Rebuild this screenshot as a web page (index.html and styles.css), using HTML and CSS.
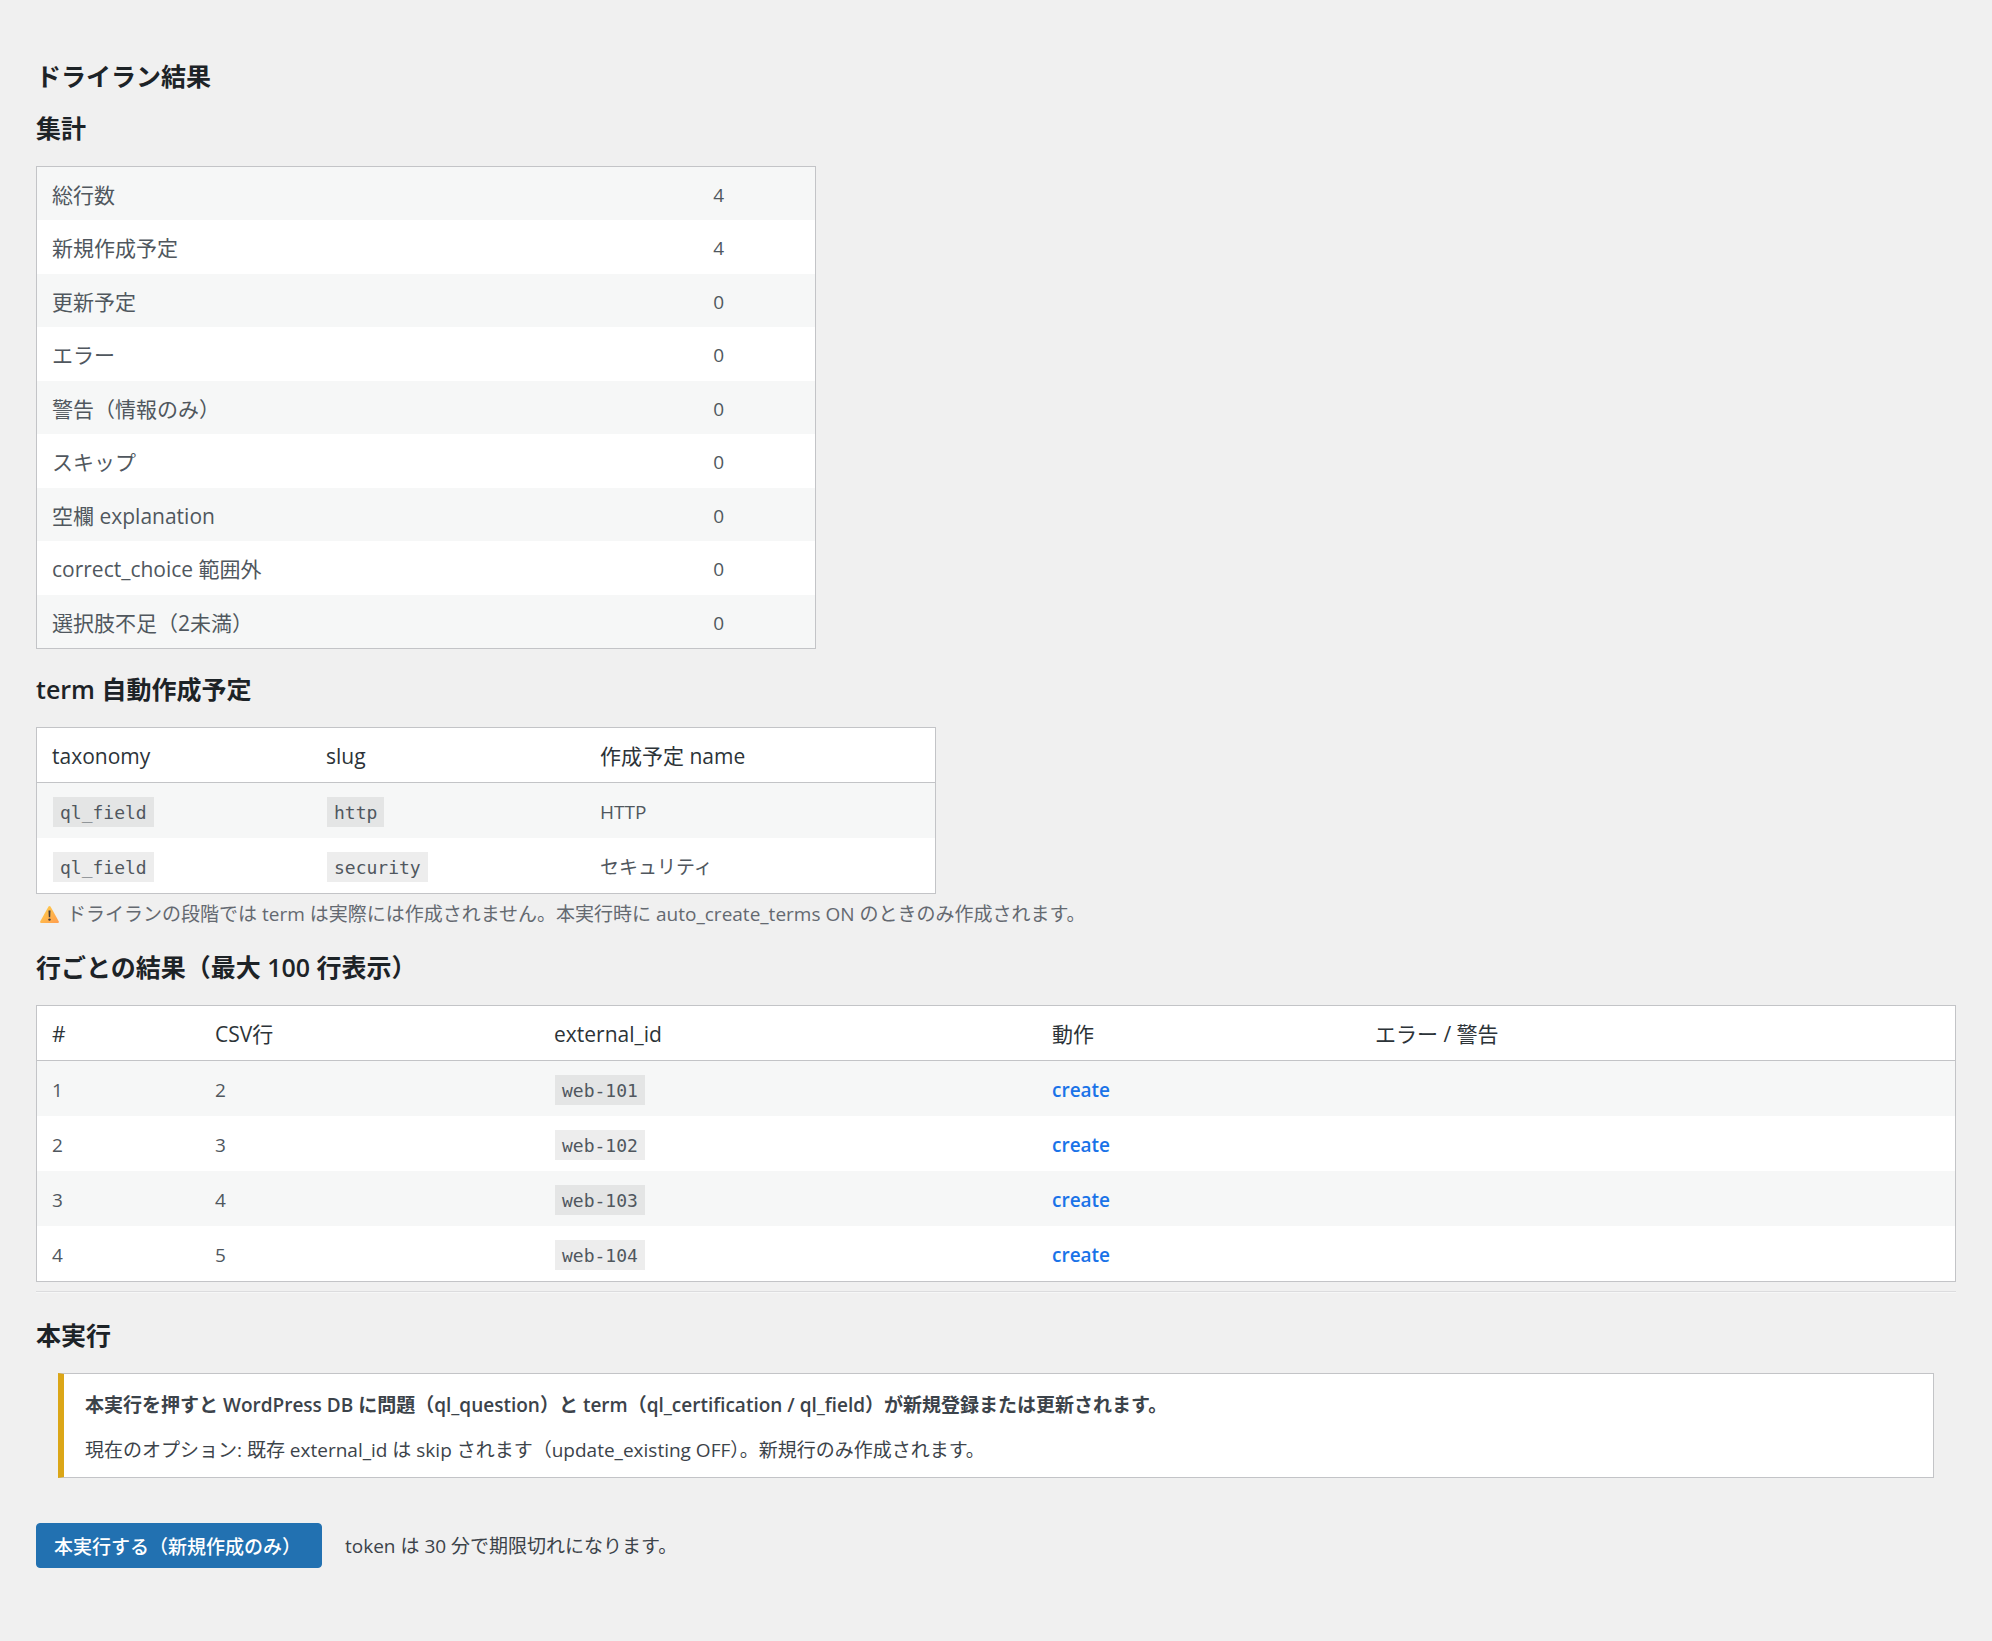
FILE: index.html
```
<!DOCTYPE html>
<html lang="ja">
<head>
    <meta charset="UTF-8">
    <meta name="viewport" content="width=device-width, initial-scale=1.0">
    <title>ドライラン結果</title>
    <link rel="stylesheet" href="styles.css">
</head>
<body>
    <main class="wrap">
        <h2>ドライラン結果</h2>

        <h3>集計</h3>
        <table class="list-table striped summary-table">
            <tbody>
                <tr><th scope="row">総行数</th><td>4</td></tr>
                <tr><th scope="row">新規作成予定</th><td>4</td></tr>
                <tr><th scope="row">更新予定</th><td>0</td></tr>
                <tr><th scope="row">エラー</th><td>0</td></tr>
                <tr><th scope="row">警告（情報のみ）</th><td>0</td></tr>
                <tr><th scope="row">スキップ</th><td>0</td></tr>
                <tr><th scope="row">空欄 explanation</th><td>0</td></tr>
                <tr><th scope="row">correct_choice 範囲外</th><td>0</td></tr>
                <tr><th scope="row">選択肢不足（2未満）</th><td>0</td></tr>
            </tbody>
        </table>

        <h3>term 自動作成予定</h3>
        <table class="list-table striped term-table">
            <thead>
                <tr>
                    <th scope="col" class="col-taxonomy">taxonomy</th>
                    <th scope="col" class="col-slug">slug</th>
                    <th scope="col">作成予定 name</th>
                </tr>
            </thead>
            <tbody>
                <tr>
                    <td><code>ql_field</code></td>
                    <td><code>http</code></td>
                    <td>HTTP</td>
                </tr>
                <tr>
                    <td><code>ql_field</code></td>
                    <td><code>security</code></td>
                    <td>セキュリティ</td>
                </tr>
            </tbody>
        </table>
        <p class="description">
            <svg class="warning-icon" viewBox="0 0 19 17" aria-hidden="true">
                <defs>
                    <linearGradient id="warning-fill" x1="0" y1="0" x2="1" y2="1">
                        <stop offset="0" stop-color="#ffd04a"/>
                        <stop offset="1" stop-color="#ff9d4f"/>
                    </linearGradient>
                </defs>
                <path fill="url(#warning-fill)" d="M8.5 0.6Q9.5 -0.4 10.5 0.6L18.8 15.4Q19.2 17 17.8 17H1.2Q-0.2 17 0.2 15.4Z"/>
                <path fill="#433b3b" d="M8.5 4.4h2l-0.3 6.8h-1.4z"/>
                <circle cx="9.5" cy="13.6" r="1.2" fill="#433b3b"/>
            </svg>
            <span>ドライランの段階では term は実際には作成されません。本実行時に auto_create_terms ON のときのみ作成されます。</span>
        </p>

        <h3>行ごとの結果（最大 100 行表示）</h3>
        <table class="list-table striped result-table">
            <thead>
                <tr>
                    <th scope="col" class="col-num">#</th>
                    <th scope="col" class="col-line">CSV行</th>
                    <th scope="col" class="col-id">external_id</th>
                    <th scope="col" class="col-action">動作</th>
                    <th scope="col">エラー / 警告</th>
                </tr>
            </thead>
            <tbody>
                <tr><td>1</td><td>2</td><td><code>web-101</code></td><td><strong class="action-create">create</strong></td><td></td></tr>
                <tr><td>2</td><td>3</td><td><code>web-102</code></td><td><strong class="action-create">create</strong></td><td></td></tr>
                <tr><td>3</td><td>4</td><td><code>web-103</code></td><td><strong class="action-create">create</strong></td><td></td></tr>
                <tr><td>4</td><td>5</td><td><code>web-104</code></td><td><strong class="action-create">create</strong></td><td></td></tr>
            </tbody>
        </table>

        <hr>

        <h3>本実行</h3>
        <div class="notice notice-warning">
            <p><strong>本実行を押すと WordPress DB に問題（ql_question）と term（ql_certification / ql_field）が新規登録または更新されます。</strong></p>
            <p>現在のオプション: 既存 external_id は skip されます（update_existing OFF）。新規行のみ作成されます。</p>
        </div>

        <form class="submit-row">
            <button type="button" class="button-primary">本実行する（新規作成のみ）</button>
            <span>token は 30 分で期限切れになります。</span>
        </form>
    </main>
</body>
</html>
```
FILE: styles.css
```
* {
    box-sizing: border-box;
}

body {
    margin: 0;
    background: #f0f0f0;
    color: #3c434a;
    font-family: "Segoe UI", "Open Sans", "Noto Sans CJK JP", sans-serif;
    font-size: 19px;
    line-height: 28px;
}

.wrap {
    padding: 58px 36px 72px;
}

h2,
h3 {
    margin: 0;
    color: #1d2327;
    font-size: 25px;
    font-weight: 600;
    line-height: 36px;
}

h2 {
    margin-bottom: 16px;
}

h3 {
    margin-bottom: 20px;
}

/* tables */
.list-table {
    width: 100%;
    border: 1px solid #c3c4c7;
    border-spacing: 0;
    background: #fff;
    color: #50575e;
    table-layout: fixed;
}

.list-table th,
.list-table td {
    height: 55px;
    padding: 2px 15px 0;
    text-align: left;
    vertical-align: middle;
}

.list-table th {
    font-size: 21px;
    font-weight: 400;
}

.list-table thead th {
    border-bottom: 1px solid #c3c4c7;
    color: #2c3338;
}

.striped tbody tr:nth-child(odd) {
    background: #f6f7f7;
}

.summary-table {
    max-width: 780px;
    margin-bottom: 22px;
}

.summary-table th {
    width: 85%;
}

.summary-table th,
.summary-table td {
    height: 53px;
}

.summary-table tr:nth-child(even) > * {
    height: 54px;
}

.term-table {
    max-width: 900px;
}

.term-table .col-taxonomy,
.term-table .col-slug {
    width: 274px;
}

.result-table .col-num {
    width: 163px;
}

.result-table .col-line {
    width: 339px;
}

.result-table .col-id {
    width: 498px;
}

.result-table .col-action {
    width: 323px;
}

code {
    display: inline-block;
    margin: 0 1px;
    padding: 2px 7px 0;
    background: rgba(0, 0, 0, 0.07);
    font-family: Consolas, "DejaVu Sans Mono", monospace;
    font-size: 18px;
    line-height: 28px;
}

.action-create {
    color: #1a73e8;
    font-weight: 600;
}

.description {
    display: flex;
    align-items: center;
    gap: 8px;
    margin: 6px 0 21px;
    padding-left: 4px;
    color: #646970;
}

.warning-icon {
    width: 19px;
    height: 17px;
}

hr {
    height: 2px;
    margin: 9px 0 24px;
    border: 0;
    border-top: 1px solid #dcdcde;
    border-bottom: 1px solid #f6f7f7;
}

/* notice */
.notice {
    margin: 0 22px 45px;
    padding: 17px 21px 13px;
    border: 1px solid #c3c4c7;
    border-left: 6px solid #dba617;
    background: #fff;
}

.notice p {
    margin: 0;
}

.notice p + p {
    margin-top: 17px;
}

.notice strong {
    font-weight: 600;
}

/* submit */
.submit-row {
    display: flex;
    align-items: center;
    gap: 23px;
}

.button-primary {
    min-height: 45px;
    padding: 0 20px 0 17px;
    border: 1px solid #2271b1;
    border-radius: 4px;
    background: #2271b1;
    color: #fff;
    font-family: inherit;
    font-size: 19px;
    font-weight: 500;
    cursor: pointer;
}

.button-primary:hover {
    background: #135e96;
}
```
